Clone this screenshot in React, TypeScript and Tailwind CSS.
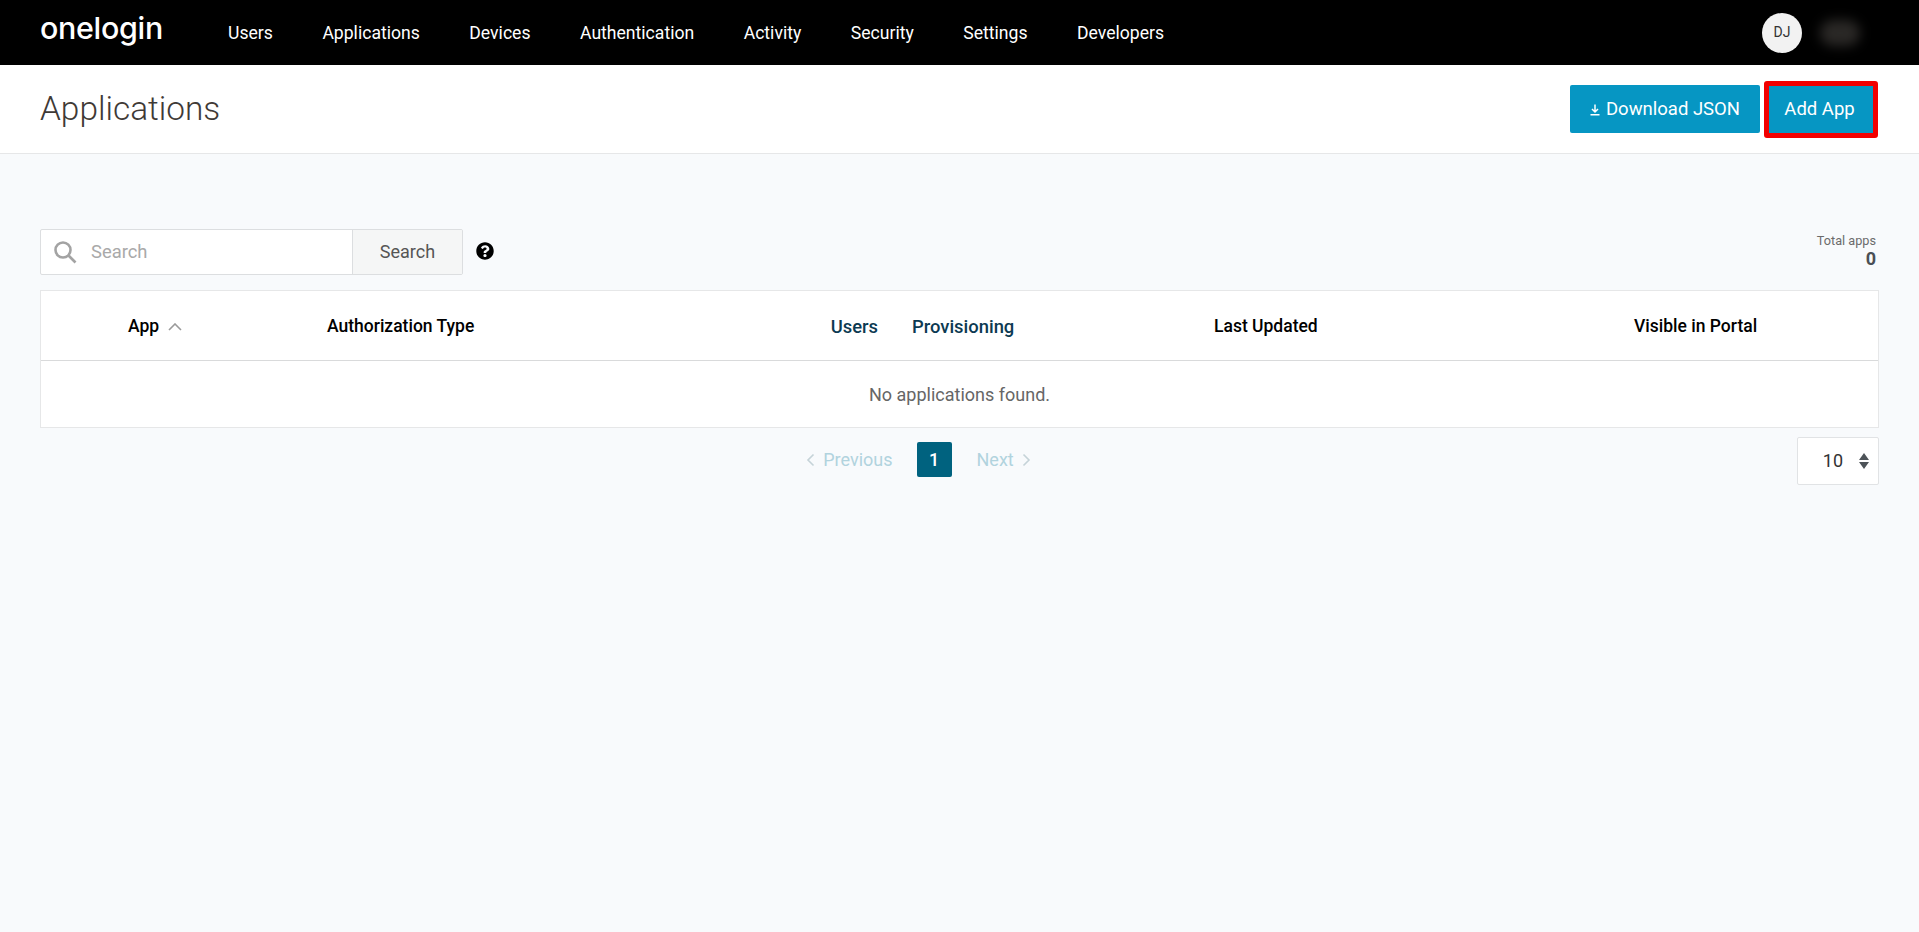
import React from "react";
import { FaQuestionCircle } from "react-icons/fa";

const nav = ["Users", "Applications", "Devices", "Authentication", "Activity", "Security", "Settings", "Developers"];

export default function App() {
  return (
    <div className="min-h-[932px] bg-[#f8fafc] font-['Roboto',sans-serif] text-[#3f3f3f]">
      <header className="flex h-[65px] items-center bg-black pl-[40px] pr-[52px] text-white">
        <div className="mt-[-8px] w-[188px] font-['Inter',sans-serif] text-[30.4px] font-[450] leading-none tracking-[-0.3px]">onelogin</div>
        <nav className="mt-[1px] flex gap-[49.5px] text-[17.6px] text-white">
          {nav.map((n) => (
            <span key={n}>{n}</span>
          ))}
        </nav>
        <div className="ml-auto flex items-center gap-[10px]">
          <div className="flex h-[40px] w-[40px] items-center justify-center rounded-full bg-[#f2f2f2] text-[14px] text-[#333]">DJ</div>
          <div className="h-[34px] w-[55px] bg-black">
            <div className="mx-auto mt-[4px] h-[26px] w-[40px] rounded-full bg-[#2a2826] blur-[6px]" />
          </div>
        </div>
      </header>

      <div className="flex h-[89px] items-center justify-between border-b border-[#e6e7e8] bg-white pl-[40px] pr-[41px]">
        <h1 className="text-[33.4px] font-light text-[#3f3a36]">Applications</h1>
        <div className="flex items-center gap-[4px]">
          <button className="flex h-[48px] w-[190px] items-center justify-center gap-[6px] rounded-[2px] bg-[#0696c3] pt-[1px] text-[18.5px] text-white">
            <svg width="10" height="12" viewBox="0 0 10 12" fill="none" stroke="white" strokeWidth="1.5">
              <path d="M5 0.5V7.5M2 5l3 3 3-3M0.5 10.8h9" />
            </svg>
            Download JSON
          </button>
          <button className="flex h-[57px] w-[114px] items-center justify-center rounded-[3px] border-[5px] border-[#f20000] bg-[#0696c3] pr-[3px] pt-[1px] text-[18.5px] text-white">
            Add App
          </button>
        </div>
      </div>

      <main className="px-[40px] pt-[74px]">
        <div className="mb-[15px] flex items-start justify-between">
          <div className="flex items-center pt-[1px]">
            <div className="flex h-[46px] w-[423px] overflow-hidden rounded-[2px] border border-[#dcdee0] bg-white">
              <div className="flex flex-1 items-center pl-[12px]">
                <svg width="24" height="24" viewBox="0 0 24 24" fill="none" stroke="#a3a3a3" strokeWidth="2.6">
                  <circle cx="10" cy="10" r="7.5" />
                  <path d="M15.5 15.5L22.5 22.5" />
                </svg>
                <span className="ml-[14px] text-[18.4px] text-[#a9a9a9]">Search</span>
              </div>
              <div className="flex w-[110px] items-center justify-center border-l border-[#dcdee0] bg-[#f5f6f6] pb-[2px] text-[18px] text-[#555]">Search</div>
            </div>
            <FaQuestionCircle className="ml-[13px] mt-[-2px] h-[18px] w-[18px] text-black" />
          </div>
          <div className="pr-[3px] pt-[5px] text-right">
            <div className="text-[12.7px] leading-[15px] text-[#6b6b6b]">Total apps</div>
            <div className="text-[18px] font-bold leading-[21px] text-[#4a4f55]">0</div>
          </div>
        </div>

        <div className="border border-[#e6e7e8] bg-white">
          <div className="flex h-[70px] items-center border-b border-[#d9dadb] pt-[2px] text-[17.5px] font-medium text-black">
            <div className="flex w-[286px] items-center pl-[87px]">
              App
              <svg className="ml-[9px]" width="14" height="8" viewBox="0 0 14 8" fill="none" stroke="#9a9a9a" strokeWidth="1.6">
                <path d="M1 7l6-6 6 6" />
              </svg>
            </div>
            <div className="w-[420px]">Authorization Type</div>
            <div className="w-[131px] text-right text-[18.4px] text-[#0c3a52]">Users</div>
            <div className="ml-[34px] w-[302px] text-[18.4px] text-[#0c3a52]">Provisioning</div>
            <div className="w-[420px]">Last Updated</div>
            <div>Visible in Portal</div>
          </div>
          <div className="flex h-[66px] items-center justify-center text-[18px] text-[#666]">No applications found.</div>
        </div>

        <div className="relative mt-[9px] flex h-[47px] items-start justify-center">
          <div className="mr-[82px] mt-[5px] flex h-[35px] items-center text-[18px] text-[#b1d3de]">
            <div className="flex items-center">
              <svg width="9" height="14" viewBox="0 0 9 14" fill="none" stroke="#c5d3d8" strokeWidth="1.6" className="mr-[8px]">
                <path d="M7.5 1.5L2 7l5.5 5.5" />
              </svg>
              Previous
            </div>
            <div className="ml-[24px] mr-[25px] flex h-[35px] w-[35px] items-center justify-center rounded-[2px] bg-[#00627f] font-medium text-white">1</div>
            <div className="flex items-center">
              Next
              <svg width="9" height="14" viewBox="0 0 9 14" fill="none" stroke="#c5d3d8" strokeWidth="1.6" className="ml-[8px]">
                <path d="M1.5 1.5L7 7l-5.5 5.5" />
              </svg>
            </div>
          </div>
          <div className="absolute right-0 top-0 flex h-[48px] w-[82px] items-center justify-end rounded-[2px] border border-[#e1e3e5] bg-white pb-[1px] pr-[9px] text-[18px] text-[#333]">
            <span className="mr-[16px]">10</span>
            <svg width="10" height="16" viewBox="0 0 10 16" fill="#4d5358">
              <path d="M5 0l5 7H0zM5 16L0 9h10z" />
            </svg>
          </div>
        </div>
      </main>
    </div>
  );
}
